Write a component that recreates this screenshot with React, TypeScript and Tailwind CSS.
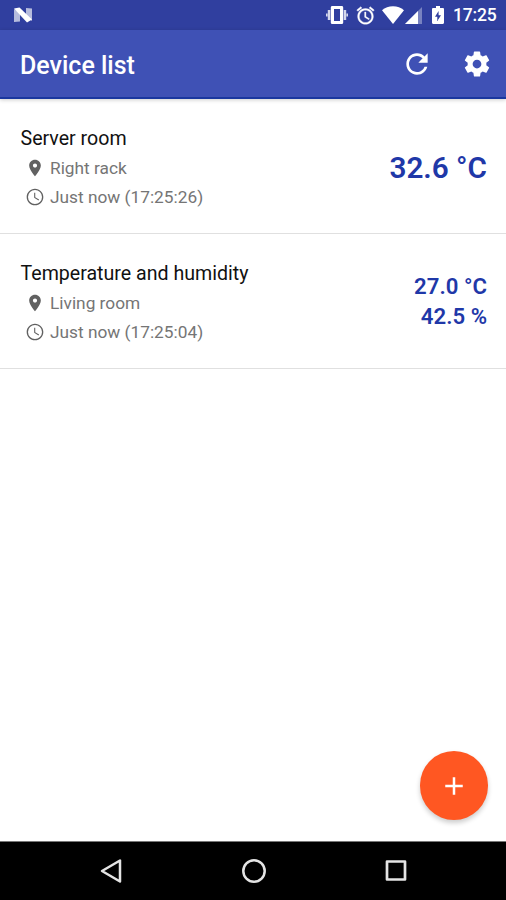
import type { ReactNode } from "react";

type Device = {
  name: string;
  location: string;
  updated: string;
  values: string[];
};

const DEVICES: Device[] = [
  {
    name: "Server room",
    location: "Right rack",
    updated: "Just now (17:25:26)",
    values: ["32.6 °C"],
  },
  {
    name: "Temperature and humidity",
    location: "Living room",
    updated: "Just now (17:25:04)",
    values: ["27.0 °C", "42.5 %"],
  },
];

function Icon({
  className,
  viewBox = "0 0 24 24",
  children,
}: {
  className: string;
  viewBox?: string;
  children: ReactNode;
}) {
  return (
    <svg viewBox={viewBox} fill="currentColor" aria-hidden className={className}>
      {children}
    </svg>
  );
}

function StatusBar() {
  return (
    <div className="flex h-[30px] items-center bg-[#303f9f] pr-[9px] pl-[13px] text-white">
      <Icon viewBox="0 0 20 16" className="h-4 w-5">
        <path d="M1 2l6 4v8.500l-6 .5zM13 1l6 .5v12.500l-6-4z" opacity=".65" />
        <path d="M1 1.500L6.500.5 19 12.500 14 15.500z" />
      </Icon>
      <Icon viewBox="0 0 22 18" className="ml-auto h-[18px] w-[22px]">
        <path
          fillRule="evenodd"
          d="M6.200 0h9.600c.8 0 1.400.7 1.400 1.500v15c0 .8-.6 1.500-1.400 1.500H6.200c-.8 0-1.400-.7-1.400-1.500v-15C4.800.7 5.400 0 6.200 0zM8 3v12h6V3z"
        />
        <path d="M1.800 4h2.500v10H1.800zM17.700 4h2.500v10h-2.500zM0 7.500h1.500v3H0zM20.500 7.500H22v3h-1.500z" opacity=".8" />
      </Icon>
      <Icon className="ml-[7px] h-[21px] w-[21px]">
        <path
          d="M22 5.720l-4.600-3.860-1.290 1.530 4.600 3.860L22 5.720zM7.880 3.390L6.600 1.860 2 5.710l1.290 1.530 4.590-3.850zM12.500 8H11v6l4.750 2.850.75-1.230-4-2.370V8zM12 4c-4.970 0-9 4.030-9 9s4.020 9 9 9c4.970 0 9-4.030 9-9s-4.030-9-9-9zm0 16c-3.870 0-7-3.130-7-7s3.130-7 7-7 7 3.130 7 7-3.130 7-7 7z"
          stroke="currentColor"
          strokeWidth=".4"
        />
      </Icon>
      <Icon viewBox="0 0 22 18" className="ml-[6px] h-[18px] w-[22px]">
        <path d="M11 18L0 4.200C3 1.600 6.800.2 11 .2s8 1.400 11 4z" />
      </Icon>
      <Icon viewBox="0 0 17 17" className="ml-px h-[17px] w-[17px]">
        <path d="M0 17L17 0v17z" opacity=".35" />
        <path d="M0 17L13 4v13z" />
      </Icon>
      <Icon viewBox="0 0 12 18" className="ml-[10px] h-[18px] w-3">
        <path
          fillRule="evenodd"
          d="M4 0h4v2h2.800C11.500 2 12 2.500 12 3.200v13.600c0 .7-.5 1.200-1.200 1.200H1.200C.5 18 0 17.500 0 16.800V3.200C0 2.500.5 2 1.200 2H4zM6.600 5L3 10.700h2.300V15L9 9.300H6.600z"
        />
      </Icon>
      <span className="mt-[2px] ml-[9px] w-[44px] text-[17.5px] leading-none font-medium tracking-[-0.2px] whitespace-nowrap">
        17:25
      </span>
    </div>
  );
}

function Toolbar() {
  return (
    <header className="relative flex h-[69px] items-center border-b-2 border-[#1a379f] bg-[#3f51b5] pr-[13px] pl-5 text-white shadow-[0_1px_4px_rgba(0,0,0,0.2)]">
      <h1 className="mt-[4px] text-[25px] leading-none font-medium">Device list</h1>
      <button type="button" aria-label="Refresh" className="ml-auto">
        <Icon className="h-8 w-8">
          <path d="M17.650 6.350C16.200 4.900 14.210 4 12 4c-4.420 0-7.990 3.580-7.990 8s3.570 8 7.990 8c3.730 0 6.840-2.550 7.730-6h-2.080c-.82 2.330-3.040 4-5.650 4-3.310 0-6-2.690-6-6s2.690-6 6-6c1.660 0 3.140.69 4.220 1.780L13 11h7V4l-2.350 2.350z" />
        </Icon>
      </button>
      <button type="button" aria-label="Settings" className="ml-7">
        <Icon className="h-[30px] w-8">
          <path d="M19.430 12.980c.04-.32.07-.64.07-.98s-.03-.66-.07-.98l2.110-1.650c.19-.15.24-.42.12-.64l-2-3.460c-.12-.22-.39-.3-.61-.22l-2.490 1c-.52-.4-1.080-.73-1.690-.98l-.38-2.650C14.460 2.180 14.250 2 14 2h-4c-.25 0-.46.18-.49.42l-.38 2.650c-.61.25-1.170.59-1.690.98l-2.490-1c-.23-.09-.49 0-.61.22l-2 3.460c-.13.22-.07.49.12.64l2.110 1.650c-.04.32-.07.65-.07.98s.03.66.07.98l-2.110 1.650c-.19.15-.24.42-.12.64l2 3.460c.12.22.39.3.61.22l2.490-1c.52.4 1.080.73 1.690.98l.38 2.650c.03.24.24.42.49.42h4c.25 0 .46-.18.49-.42l.38-2.650c.61-.25 1.170-.59 1.690-.98l2.490 1c.23.09.49 0 .61-.22l2-3.460c.12-.22.07-.49-.12-.64l-2.110-1.650zM12 15.500c-1.930 0-3.500-1.570-3.500-3.500s1.570-3.500 3.500-3.500 3.500 1.570 3.500 3.500-1.570 3.500-3.500 3.500z" />
        </Icon>
      </button>
    </header>
  );
}

function DeviceRow({ device }: { device: Device }) {
  const single = device.values.length === 1;
  return (
    <li className="flex h-[135px] items-center justify-between border-b border-[#e0e0e0] pt-[3px] pr-[19px] pl-5">
      <div>
        <h2 className="pl-[0.500px] text-[19.6px] leading-[30px] text-[#111]">{device.name}</h2>
        <p className="flex h-[30px] items-center gap-[5px] pl-[5px] text-[17.3px] text-[#757575]">
          <Icon className="mb-[2px] h-5 w-5 text-[#616161]">
            <path d="M12 2C8.130 2 5 5.130 5 9c0 5.250 7 13 7 13s7-7.750 7-13c0-3.870-3.130-7-7-7zm0 9.500c-1.380 0-2.500-1.120-2.500-2.500s1.120-2.500 2.500-2.500 2.500 1.120 2.500 2.500-1.120 2.500-2.500 2.500z" />
          </Icon>
          {device.location}
        </p>
        <p className="flex h-7 items-center gap-[5px] pl-[5px] text-[17.3px] text-[#757575]">
          <Icon className="mb-[2px] h-5 w-5 text-[#616161]">
            <path d="M11.990 2C6.470 2 2 6.480 2 12s4.470 10 9.990 10C17.520 22 22 17.520 22 12S17.520 2 11.990 2zM12 20.400a8.400 8.400 0 110-16.800 8.400 8.400 0 010 16.800zM12.300 7H11v6l5.200 3.100.7-1.100-4.600-2.700z" />
          </Icon>
          {device.updated}
        </p>
      </div>
      <div
        className={
          single
            ? "text-right text-[29.7px] leading-[36px] font-semibold text-[#1f38a8]"
            : "pb-[3px] text-right text-[22.2px] leading-[30px] font-semibold text-[#1f38a8]"
        }
      >
        {device.values.map((v) => (
          <div key={v}>{v}</div>
        ))}
      </div>
    </li>
  );
}

function NavBar() {
  return (
    <nav className="flex h-[59px] items-center justify-center gap-[110px] border-t border-[#777] bg-black pl-px text-[#e4e4e4]">
      <button type="button" aria-label="Back">
        <svg viewBox="0 0 32 32" className="h-8 w-8" fill="none" stroke="currentColor" strokeWidth="2.500" strokeLinejoin="round">
          <path d="M24 5.500v21L6 16z" />
        </svg>
      </button>
      <button type="button" aria-label="Home">
        <svg viewBox="0 0 32 32" className="h-8 w-8" fill="none" stroke="currentColor" strokeWidth="2.500">
          <circle cx="16" cy="16" r="10.700" />
        </svg>
      </button>
      <button type="button" aria-label="Recent apps">
        <svg viewBox="0 0 32 32" className="h-8 w-8" fill="none" stroke="currentColor" strokeWidth="2.700" strokeLinejoin="round">
          <path d="M7 6.500h18v18H7z" />
        </svg>
      </button>
    </nav>
  );
}

export default function App() {
  return (
    <div className="relative flex h-[900px] w-[506px] flex-col overflow-hidden bg-white font-['Roboto',sans-serif]">
      <StatusBar />
      <Toolbar />
      <ul className="flex-1">
        {DEVICES.map((d) => (
          <DeviceRow key={d.name} device={d} />
        ))}
      </ul>
      <NavBar />
      <button
        type="button"
        aria-label="Add device"
        className="absolute right-[18px] bottom-[80px] flex h-[69px] w-[68px] items-center justify-center rounded-full bg-[#ff5722] text-white shadow-[0_3px_5px_rgba(0,0,0,0.2)]"
      >
        <Icon className="h-[30px] w-[30px]">
          <path d="M19 13h-6v6h-2v-6H5v-2h6V5h2v6h6v2z" />
        </Icon>
      </button>
    </div>
  );
}
